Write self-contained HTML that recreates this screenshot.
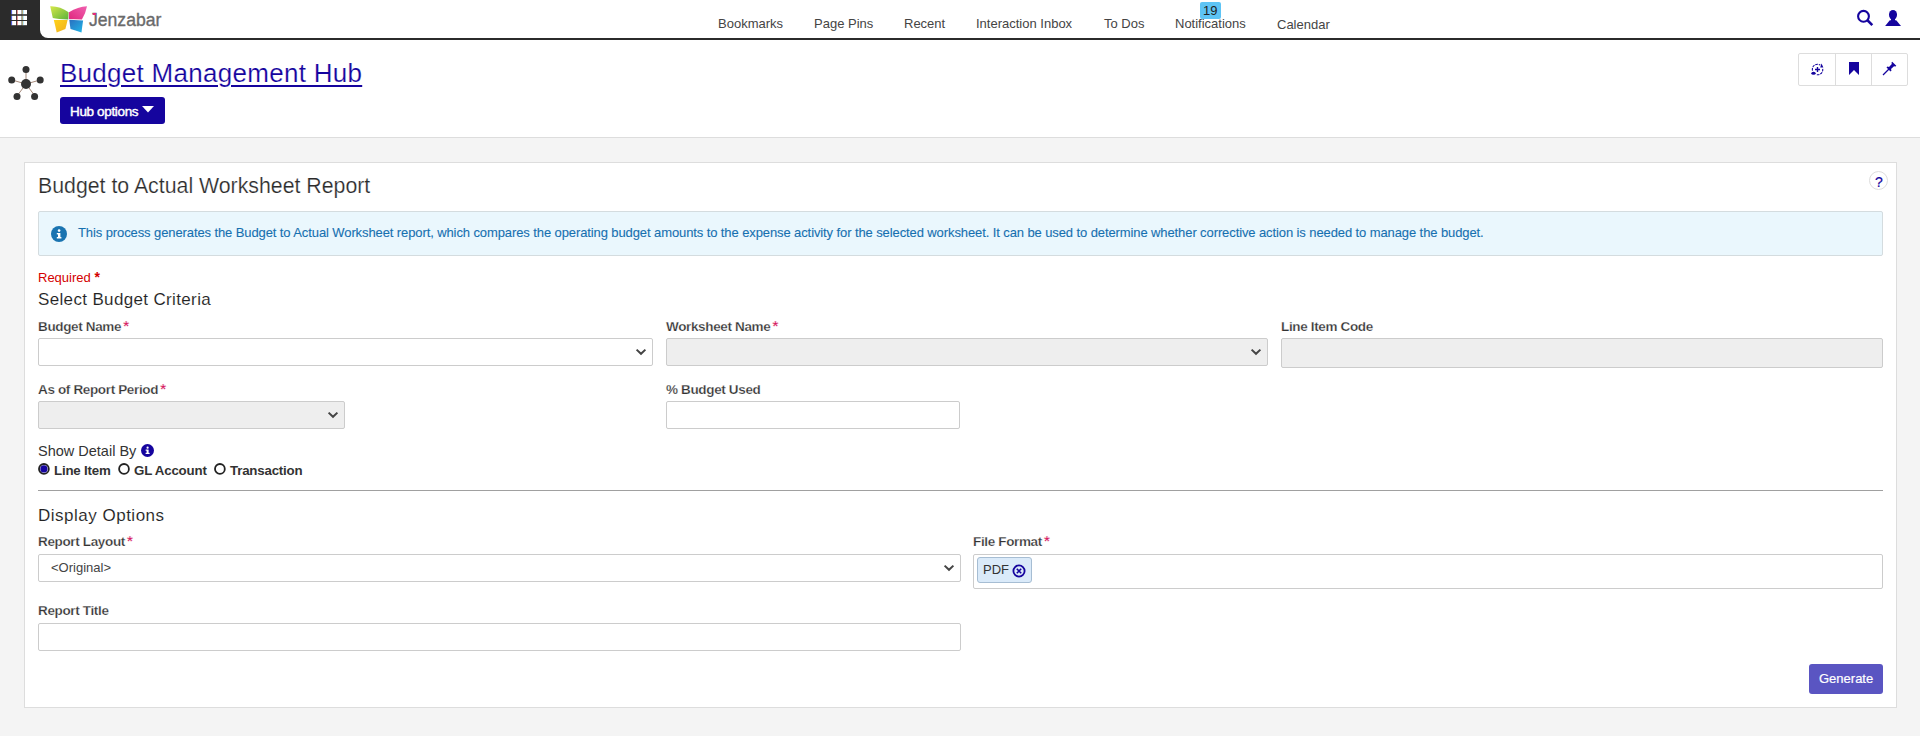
<!DOCTYPE html>
<html><head><meta charset="utf-8">
<style>
*{box-sizing:border-box;margin:0;padding:0}
html,body{width:1920px;height:736px;overflow:hidden;background:#f4f4f4;font-family:"Liberation Sans",sans-serif;color:#333}
.a{position:absolute}
.t{position:absolute;line-height:1;white-space:nowrap}
#hdr{position:absolute;left:0;top:0;width:1920px;height:40px;background:#2b2b2b}
#hdrw{position:absolute;left:40px;top:0;width:1880px;height:38px;background:#fff;border-bottom-left-radius:8px}
.nav{font-size:13px;color:#444}
#hub{position:absolute;left:0;top:40px;width:1920px;height:98px;background:#fff;border-bottom:1px solid #ddd}
#card{position:absolute;left:24px;top:162px;width:1873px;height:546px;background:#fff;border:1px solid #ddd}
.lbl{font-size:13.5px;font-weight:700;color:#333;letter-spacing:-0.35px;-webkit-text-stroke:0.25px #fff}
.ast{color:#d4145a;margin-left:2px;font-size:15px;font-weight:700;line-height:0}
.inp{position:absolute;border:1px solid #ccc;border-radius:2px;background:#fff}
.dis{background:#eee}
.chev{position:absolute;width:14px;height:10px}
</style></head><body>
<div id="hdr"></div>
<div id="hdrw"></div>
<!-- grid icon -->
<svg class="a" style="left:11px;top:9px" width="17" height="17" viewBox="0 0 17 17"><rect x="0.5" y="1" width="4.6" height="4.2" fill="#fff"/><rect x="0.3" y="1" width="0.8" height="4.2" fill="#2a3cff" opacity="0.85"/><rect x="6" y="1" width="4.6" height="4.2" fill="#fff"/><rect x="5.8" y="1" width="0.8" height="4.2" fill="#d03030" opacity="0.85"/><rect x="11.4" y="1" width="4.6" height="4.2" fill="#fff"/><rect x="11.200000000000001" y="1" width="0.6" height="4.2" fill="#f0a020" opacity="0.8"/><rect x="11.8" y="1" width="0.6" height="4.2" fill="#30c0f0" opacity="0.8"/><rect x="0.5" y="6.8" width="4.6" height="4.2" fill="#fff"/><rect x="0.3" y="6.8" width="0.8" height="4.2" fill="#2a3cff" opacity="0.85"/><rect x="6" y="6.8" width="4.6" height="4.2" fill="#fff"/><rect x="5.8" y="6.8" width="0.8" height="4.2" fill="#d03030" opacity="0.85"/><rect x="11.4" y="6.8" width="4.6" height="4.2" fill="#fff"/><rect x="11.200000000000001" y="6.8" width="0.6" height="4.2" fill="#f0a020" opacity="0.8"/><rect x="11.8" y="6.8" width="0.6" height="4.2" fill="#30c0f0" opacity="0.8"/><rect x="0.5" y="12" width="4.6" height="4.2" fill="#fff"/><rect x="0.3" y="12" width="0.8" height="4.2" fill="#2a3cff" opacity="0.85"/><rect x="6" y="12" width="4.6" height="4.2" fill="#fff"/><rect x="5.8" y="12" width="0.8" height="4.2" fill="#d03030" opacity="0.85"/><rect x="11.4" y="12" width="4.6" height="4.2" fill="#fff"/><rect x="11.200000000000001" y="12" width="0.6" height="4.2" fill="#f0a020" opacity="0.8"/><rect x="11.8" y="12" width="0.6" height="4.2" fill="#30c0f0" opacity="0.8"/></svg>
<!-- logo butterfly -->
<svg class="a" style="left:46px;top:2px" width="44" height="34" viewBox="0 0 44 34">
<defs>
<linearGradient id="gG" x1="0" y1="0" x2="1" y2="1"><stop offset="0" stop-color="#d7e84a"/><stop offset="1" stop-color="#5cb33a"/></linearGradient>
<linearGradient id="gP" x1="0" y1="1" x2="1" y2="0"><stop offset="0" stop-color="#e0287e"/><stop offset="1" stop-color="#f060b0"/></linearGradient>
<linearGradient id="gY" x1="0" y1="0" x2="1" y2="1"><stop offset="0" stop-color="#ffd21a"/><stop offset="1" stop-color="#f0b020"/></linearGradient>
<linearGradient id="gB" x1="0" y1="0" x2="1" y2="1"><stop offset="0" stop-color="#2a6fbf"/><stop offset="1" stop-color="#22b6e8"/></linearGradient>
</defs>
<path d="M4.2 4.2 Q14 3.8 22.6 10.3 L22.3 17.4 Q12 17.2 6.8 16.1 Q5.5 10 4.2 4.2 Z" fill="url(#gG)"/>
<path d="M22.9 10.3 Q32 4.5 41 4.2 Q39.5 12 35.9 17.4 L22.9 17.1 Z" fill="url(#gP)"/>
<path d="M7.8 18.1 L21.6 18.1 Q20.5 23 19.4 27.1 Q15 29 10.7 30.4 Q9.3 24 7.8 18.1 Z" fill="url(#gY)"/>
<path d="M23.3 17.8 L37.1 18.4 Q36.2 24.5 35.5 30.4 Q29 28.5 24.5 27.1 Q23.8 22.5 23.3 17.8 Z" fill="url(#gB)"/>
</svg>
<div class="t" style="left:89px;top:12px;font-size:17.6px;color:#6a6a6a;-webkit-text-stroke:0.35px #6a6a6a">Jenzabar</div>
<div class="a" style="left:93px;top:13px;width:3px;height:2px;background:#e6287e"></div>

<div class="t nav" style="left:718px;top:17px">Bookmarks</div>
<div class="t nav" style="left:814px;top:17px">Page Pins</div>
<div class="t nav" style="left:904px;top:17px">Recent</div>
<div class="t nav" style="left:976px;top:17px">Interaction Inbox</div>
<div class="t nav" style="left:1104px;top:17px">To Dos</div>
<div class="t nav" style="left:1175px;top:17px">Notifications</div>
<div class="a" style="left:1200px;top:2px;width:21px;height:17px;background:#5ec4f5;border-radius:2px"></div>
<div class="t nav" style="left:1203px;top:4px;color:#222">19</div>
<div class="t nav" style="left:1277px;top:18px">Calendar</div>

<!-- search & user -->
<svg class="a" style="left:1856px;top:9px" width="18" height="18" viewBox="0 0 18 18">
<circle cx="7.5" cy="7.3" r="5.4" fill="none" stroke="#15049e" stroke-width="2.1"/>
<path d="M11.2 11 L16.3 16.1" stroke="#15049e" stroke-width="2.5"/>
</svg>
<svg class="a" style="left:1884px;top:9px" width="18" height="18" viewBox="0 0 18 18">
<rect x="5" y="0.9" width="8" height="9.6" rx="4" ry="4.4" fill="#15049e"/>
<path d="M1.1 17 L5.8 11.3 L12.2 11.3 L17 17 Z" fill="#15049e"/>
<rect x="7" y="9" width="4" height="3" fill="#15049e"/>
</svg>

<div id="hub"></div>
<!-- hub icon -->
<svg class="a" style="left:6px;top:64px" width="40" height="38" viewBox="0 0 40 38">
<g stroke="#9a7a6a" stroke-width="0.9"><line x1="20" y1="20" x2="20" y2="6"/><line x1="20" y1="20" x2="6" y2="16"/><line x1="20" y1="20" x2="34" y2="16"/><line x1="20" y1="20" x2="11" y2="32"/><line x1="20" y1="20" x2="29" y2="32"/></g>
<g fill="#333"><circle cx="20" cy="20" r="5"/><circle cx="20" cy="5.6" r="3.5"/><circle cx="5.7" cy="15.9" r="3.5"/><circle cx="34.2" cy="15.9" r="3.5"/><circle cx="11" cy="32.5" r="3.5"/><circle cx="28.6" cy="32.5" r="3.5"/></g>
</svg>
<div class="t" style="left:60px;top:60px;font-size:26px;letter-spacing:0.28px;color:#15049e;text-decoration:underline;text-decoration-thickness:2px;text-underline-offset:3px;text-decoration-skip-ink:auto"><span style="-webkit-text-stroke:0.2px #fff">Budget Management Hub</span></div>
<div class="a" style="left:60px;top:97px;width:105px;height:27px;background:#15049e;border-radius:3px"></div>
<div class="t" style="left:70px;top:104.5px;font-size:13.5px;letter-spacing:-0.35px;color:#fff;-webkit-text-stroke:0.45px #fff">Hub options</div>
<svg class="a" style="left:142px;top:106px" width="12" height="7" viewBox="0 0 12 7"><path d="M0 0 L12 0 L6 6.5 Z" fill="#fff"/></svg>

<!-- top right button group -->
<div class="a" style="left:1798px;top:53px;width:110px;height:33px;border:1px solid #ddd;border-radius:2px;background:#fff"></div>
<div class="a" style="left:1835px;top:53px;width:1px;height:33px;background:#ddd"></div>
<div class="a" style="left:1871px;top:53px;width:1px;height:33px;background:#ddd"></div>

<svg class="a" style="left:1810px;top:62px" width="15" height="15" viewBox="0 0 15 15">
<path d="M2.5 8.6 A5.1 5.1 0 0 1 10.3 3.1" fill="none" stroke="#15049e" stroke-width="1.1" stroke-dasharray="2.6 0.9"/>
<path d="M12.7 6.8 A5.1 5.1 0 0 1 6.4 12.6" fill="none" stroke="#15049e" stroke-width="1.1" stroke-dasharray="2.6 0.9"/>
<path d="M11.5 1.6 L13.4 5.4 L10.2 5.4 Z" fill="#15049e"/>
<ellipse cx="3.5" cy="11.3" rx="2.2" ry="1.5" fill="#15049e"/>
<path d="M7.5 5 V10 M5 7.5 H10" stroke="#15049e" stroke-width="1.4"/>
</svg>
<svg class="a" style="left:1849px;top:62px" width="10" height="13" viewBox="0 0 10 13"><path d="M0 0 H10 V13 L5 8 L0 13 Z" fill="#15049e"/></svg>
<svg class="a" style="left:1882px;top:61px" width="15" height="15" viewBox="0 0 15 15">
<path d="M1 14 L7 8" stroke="#15049e" stroke-width="1.3"/>
<path d="M4.5 6.5 L8.5 10.5 L9.5 9.5 L9 8 L12 5.2 L13.5 5.5 L14.3 4.8 L10.2 0.7 L9.5 1.5 L9.8 3 L7 6 L5.5 5.5 Z" fill="#15049e"/>
</svg>
<div id="card"></div>
<div class="t" style="left:38px;top:176px;font-size:21.3px;color:#2b2b2b;-webkit-text-stroke:0.22px #fff">Budget to Actual Worksheet Report</div>
<div class="a" style="left:1869px;top:171px;width:19px;height:19px;border:1px solid #ddd;border-radius:50%;background:#fff"></div>
<div class="t" style="left:1875px;top:175px;font-size:14px;color:#15049e;-webkit-text-stroke:0.2px #15049e">?</div>

<div class="a" style="left:38px;top:211px;width:1845px;height:45px;background:#eaf7fd;border:1px solid #d4dcdf;border-radius:2px"></div>
<svg class="a" style="left:51px;top:226px" width="16" height="16" viewBox="0 0 16 16"><circle cx="8" cy="8" r="8" fill="#1a74b1"/><rect x="7" y="7" width="2.4" height="5" fill="#fff"/><rect x="5.8" y="11" width="4.6" height="1.5" fill="#fff"/><rect x="5.8" y="7" width="2" height="1.4" fill="#fff"/><circle cx="8.1" cy="4.6" r="1.3" fill="#fff"/></svg>
<div class="t" style="left:78px;top:226px;font-size:13px;letter-spacing:-0.1px;color:#1670b0;-webkit-text-stroke:0.1px #1670b0">This process generates the Budget to Actual Worksheet report, which compares the operating budget amounts to the expense activity for the selected worksheet. It can be used to determine whether corrective action is needed to manage the budget.</div>

<div class="t" style="left:38px;top:271px;font-size:13px;color:#d40000">Required <span style="font-weight:700;font-size:14px;line-height:0">*</span></div>
<div class="t" style="left:38px;top:291px;font-size:17px;letter-spacing:0.35px;color:#222;-webkit-text-stroke:0.1px #fff">Select Budget Criteria</div>

<div class="t lbl" style="left:38px;top:320px">Budget Name<span class="ast">*</span></div>
<div class="inp" style="left:38px;top:338px;width:615px;height:28px"></div>
<div class="t lbl" style="left:666px;top:320px">Worksheet Name<span class="ast">*</span></div>
<div class="inp dis" style="left:666px;top:338px;width:602px;height:28px"></div>
<div class="t lbl" style="left:1281px;top:320px">Line Item Code</div>
<div class="inp dis" style="left:1281px;top:338px;width:602px;height:30px"></div>

<div class="t lbl" style="left:38px;top:383px">As of Report Period<span class="ast">*</span></div>
<div class="inp dis" style="left:38px;top:401px;width:307px;height:28px"></div>
<div class="t lbl" style="left:666px;top:383px">% Budget Used</div>
<div class="inp" style="left:666px;top:401px;width:294px;height:28px"></div>

<div class="t" style="left:38px;top:444px;font-size:14.5px;color:#333">Show Detail By</div>
<svg class="a" style="left:141px;top:444px" width="13" height="13" viewBox="0 0 13 13"><circle cx="6.5" cy="6.5" r="6.5" fill="#15049e"/><rect x="5.6" y="5.6" width="2" height="4.2" fill="#fff"/><rect x="4.6" y="8.8" width="4" height="1.2" fill="#fff"/><rect x="4.6" y="5.6" width="1.6" height="1.1" fill="#fff"/><circle cx="6.6" cy="3.7" r="1.1" fill="#fff"/></svg>

<svg class="a" style="left:37px;top:462px" width="14" height="14" viewBox="0 0 14 14"><circle cx="6.9" cy="6.9" r="4.9" fill="#fff" stroke="#222" stroke-width="1.8"/><circle cx="6.9" cy="6.9" r="3.6" fill="#15049e"/></svg>
<div class="t" style="left:54px;top:464px;font-size:13.3px;letter-spacing:-0.2px;font-weight:700;color:#333">Line Item</div>
<svg class="a" style="left:117px;top:462px" width="14" height="14" viewBox="0 0 14 14"><circle cx="7" cy="6.9" r="4.9" fill="#fff" stroke="#222" stroke-width="1.8"/></svg>
<div class="t" style="left:134px;top:464px;font-size:13.3px;letter-spacing:-0.2px;font-weight:700;color:#333">GL Account</div>
<svg class="a" style="left:213px;top:462px" width="14" height="14" viewBox="0 0 14 14"><circle cx="6.9" cy="6.9" r="4.9" fill="#fff" stroke="#222" stroke-width="1.8"/></svg>
<div class="t" style="left:230px;top:464px;font-size:13.3px;letter-spacing:-0.2px;font-weight:700;color:#333">Transaction</div>

<div class="a" style="left:38px;top:490px;width:1845px;height:1px;background:#a0a0a0"></div>
<div class="t" style="left:38px;top:507px;font-size:17px;letter-spacing:0.5px;color:#222;-webkit-text-stroke:0.1px #fff">Display Options</div>

<div class="t lbl" style="left:38px;top:535px">Report Layout<span class="ast">*</span></div>
<div class="inp" style="left:38px;top:554px;width:923px;height:28px"></div>
<div class="t" style="left:51px;top:561px;font-size:13px;color:#444">&lt;Original&gt;</div>
<div class="t lbl" style="left:973px;top:535px">File Format<span class="ast">*</span></div>
<div class="inp" style="left:973px;top:554px;width:910px;height:35px"></div>
<div class="a" style="left:977px;top:557px;width:55px;height:26px;background:#daeaf9;border:1px solid #a6bdd3;border-radius:3px"></div>
<div class="t" style="left:983px;top:563px;font-size:13px;color:#333">PDF</div>
<svg class="a" style="left:1012px;top:564px" width="14" height="14" viewBox="0 0 14 14"><circle cx="7" cy="7" r="5.6" fill="none" stroke="#15049e" stroke-width="1.8"/><path d="M4.8 4.8 L9.2 9.2 M9.2 4.8 L4.8 9.2" stroke="#15049e" stroke-width="1.6"/></svg>

<div class="t lbl" style="left:38px;top:604px">Report Title</div>
<div class="inp" style="left:38px;top:623px;width:923px;height:28px"></div>

<div class="a" style="left:1809px;top:664px;width:74px;height:30px;background:#5a55c2;border-radius:3px"></div>
<div class="t" style="left:1819px;top:672px;font-size:13px;color:#fff;-webkit-text-stroke:0.2px #fff">Generate</div>
<svg class="a" style="left:635px;top:348px" width="12" height="8" viewBox="0 0 12 8"><path d="M1.6 1.6 L6 5.8 L10.4 1.6" fill="none" stroke="#444" stroke-width="2"/></svg>
<svg class="a" style="left:1250px;top:348px" width="12" height="8" viewBox="0 0 12 8"><path d="M1.6 1.6 L6 5.8 L10.4 1.6" fill="none" stroke="#444" stroke-width="2"/></svg>
<svg class="a" style="left:327px;top:411px" width="12" height="8" viewBox="0 0 12 8"><path d="M1.6 1.6 L6 5.8 L10.4 1.6" fill="none" stroke="#444" stroke-width="2"/></svg>
<svg class="a" style="left:943px;top:564px" width="12" height="8" viewBox="0 0 12 8"><path d="M1.6 1.6 L6 5.8 L10.4 1.6" fill="none" stroke="#444" stroke-width="2"/></svg>
</body></html>
